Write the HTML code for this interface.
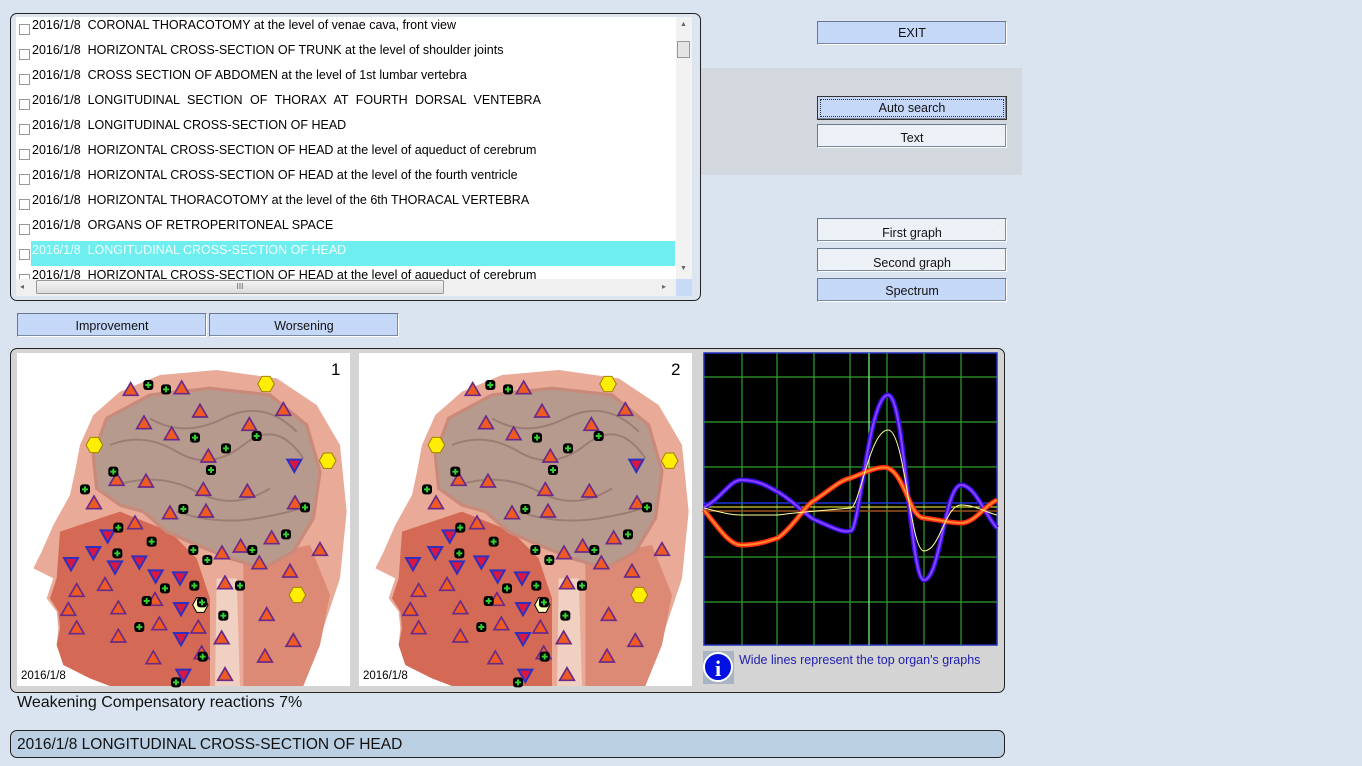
<!DOCTYPE html>
<html><head><meta charset="utf-8"><style>
*{margin:0;padding:0;box-sizing:border-box}
body{width:1362px;height:766px;background:#d9e4f0;font-family:"Liberation Sans",sans-serif;position:relative;overflow:hidden}
.a{position:absolute}
.btn{position:absolute;background:#c6d8f8;border:1px solid #6a7890;border-right-color:#fff;border-bottom-color:#fff;box-shadow:inset -1px -1px 0 #7a8aa0;font-size:12.5px;text-align:center;color:#111}
.hat{background:repeating-linear-gradient(45deg,#e6ecf3 0 1px,#f4f7fa 1px 2px)}
.row{position:absolute;left:16px;height:25px;width:660px;font-size:12.5px;line-height:25px;color:#000;white-space:nowrap}
.row i{position:absolute;left:3px;top:11px;width:11px;height:11px;border:1px solid #999;background:#fff}
.row span{position:absolute;left:16px;top:0}
</style></head><body>
<div class="a" style="left:700px;top:68px;width:322px;height:107px;background:#d3d8de"></div>

<div class="a" style="left:10px;top:13px;width:691px;height:288px;border:1px solid #222;border-radius:7px;background:#dde6f0"></div>
<div class="a" style="left:16px;top:17px;width:676px;height:279px;background:#fff;overflow:hidden">
<div class="a" style="left:15px;top:224px;width:644px;height:25px;background:#6eeeee"></div>
</div>
<div class="a" style="left:16px;top:17px;width:660px;height:262px;overflow:hidden">
<div class="row" style="left:0;top:-4px"><i></i><span>2016/1/8&nbsp; CORONAL THORACOTOMY at the level of venae cava, front view</span></div>
<div class="row" style="left:0;top:21px"><i></i><span>2016/1/8&nbsp; HORIZONTAL CROSS-SECTION OF TRUNK at the level of shoulder joints</span></div>
<div class="row" style="left:0;top:46px"><i></i><span>2016/1/8&nbsp; CROSS SECTION OF ABDOMEN at the level of 1st lumbar vertebra</span></div>
<div class="row" style="left:0;top:71px"><i></i><span>2016/1/8&nbsp; <b style="font-weight:normal;word-spacing:4px">LONGITUDINAL SECTION OF THORAX AT FOURTH DORSAL VENTEBRA</b></span></div>
<div class="row" style="left:0;top:96px"><i></i><span>2016/1/8&nbsp; LONGITUDINAL CROSS-SECTION OF HEAD</span></div>
<div class="row" style="left:0;top:121px"><i></i><span>2016/1/8&nbsp; HORIZONTAL CROSS-SECTION OF HEAD at the level of aqueduct of cerebrum</span></div>
<div class="row" style="left:0;top:146px"><i></i><span>2016/1/8&nbsp; HORIZONTAL CROSS-SECTION OF HEAD at the level of the fourth ventricle</span></div>
<div class="row" style="left:0;top:171px"><i></i><span>2016/1/8&nbsp; HORIZONTAL THORACOTOMY at the level of the 6th THORACAL VERTEBRA</span></div>
<div class="row" style="left:0;top:196px"><i></i><span>2016/1/8&nbsp; ORGANS OF RETROPERITONEAL SPACE</span></div>
<div class="row" style="left:0;top:221px"><i></i><span style="color:#f4ffff">2016/1/8&nbsp; LONGITUDINAL CROSS-SECTION OF HEAD</span></div>
<div class="row" style="left:0;top:246px"><i></i><span>2016/1/8&nbsp; HORIZONTAL CROSS-SECTION OF HEAD at the level of aqueduct of cerebrum</span></div>
</div>
<div class="a" style="left:676px;top:17px;width:16px;height:262px;background:#f2f2f2"></div>
<div class="a" style="left:680px;top:21px;font-size:7px;color:#666">▲</div>
<div class="a" style="left:677px;top:41px;width:13px;height:17px;border:1px solid #999;background:#e4e4e4"></div>
<div class="a" style="left:680px;top:265px;font-size:7px;color:#666">▼</div>
<div class="a" style="left:16px;top:279px;width:660px;height:17px;background:#f0f0f0"></div>
<div class="a" style="left:20px;top:282px;font-size:8px;color:#666">◂</div>
<div class="a" style="left:36px;top:280px;width:408px;height:14px;border:1px solid #999;border-radius:2px;background:linear-gradient(#f4f4f4,#dcdcdc);font-size:8px;text-align:center;line-height:12px;color:#555">III</div>
<div class="a" style="left:662px;top:282px;font-size:8px;color:#666">▸</div>
<div class="a" style="left:676px;top:279px;width:16px;height:17px;background:#c8daf4"></div>

<div class="btn" style="left:817px;top:21px;width:190px;height:24px;line-height:22px">EXIT</div>
<div class="btn" style="left:817px;top:96px;width:190px;height:24px;line-height:22px;border-color:#333"><div style="margin:2px;border:1px dotted #333;line-height:16px">Auto search</div></div>
<div class="btn hat" style="left:817px;top:124px;width:190px;height:24px;line-height:26px">Text</div>
<div class="btn hat" style="left:817px;top:218px;width:190px;height:24px;line-height:28px">First graph</div>
<div class="btn hat" style="left:817px;top:248px;width:190px;height:24px;line-height:28px">Second graph</div>
<div class="btn" style="left:817px;top:278px;width:190px;height:24px;line-height:24px">Spectrum</div>
<div class="btn" style="left:17px;top:313px;width:190px;height:24px;line-height:25px">Improvement</div>
<div class="btn" style="left:209px;top:313px;width:190px;height:24px;line-height:25px">Worsening</div>

<div class="a" style="left:10px;top:348px;width:995px;height:345px;border:1px solid #222;border-radius:7px;background:#d4d4d4"></div>

<svg class="a" style="left:0;top:0" width="1362" height="766">
<defs>
<polygon id="tu" points="0,-22 22,16 -22,16" fill="#ee5a22" stroke="#6a2a8a" stroke-width="5"/>
<polygon id="td" points="-21,-16 21,-16 0,21" fill="#d81840" stroke="#3030c0" stroke-width="6"/>
<g id="pl"><rect x="-15" y="-15" width="30" height="30" rx="9" fill="#000"/><path d="M-9 0H9M0 -9V9" stroke="#3c3" stroke-width="6"/></g>
<polygon id="hx" points="-25,0 -12,-23 12,-23 25,0 12,23 -12,23" fill="#ffee00" stroke="#a08000" stroke-width="3"/>
<g id="head">
<rect x="21" y="24" width="999" height="999" fill="#fff"/>
<path d="M880 1023 L930 880 L990 700 L1010 500 L990 300 L920 180 L800 100 L620 75 L450 90 L330 140 L250 210 L210 300 L195 380 L180 450 L130 540 L95 620 L70 670 L130 700 L110 760 L140 800 L145 850 L140 900 L160 960 L240 1000 L300 1023 Z" fill="#e9ab98"/>
<path d="M150 560 L330 500 L480 560 L560 640 L600 760 L600 1023 L300 1023 L240 1000 L160 960 L140 900 L150 850 L145 800 L120 760 L140 700 Z" fill="#d46a55"/>
<path d="M700 640 L900 600 L960 750 L930 900 L880 1023 L700 1023 Z" fill="#dc8a76"/>
<path d="M620 700 L680 700 L690 1023 L615 1023 Z" fill="#f0d0c0"/>
<path d="M250 330 L290 220 L420 150 L600 130 L780 150 L890 240 L930 380 L910 520 L850 620 L760 670 L660 640 L560 600 L470 560 L400 500 L330 480 L260 430 Z" fill="#b79a8e" stroke="#c88a7a" stroke-width="10"/>
<path d="M300 300 Q400 260 500 320 T700 300 T880 340 M320 420 Q450 380 560 440 T780 430 M420 220 Q520 280 640 220 T860 260 M500 500 Q620 540 740 520 T890 480" stroke="#8a6a62" stroke-width="6" fill="none" opacity=".6"/>
<g>
<use href="#tu" x="362" y="135"/><use href="#tu" x="515" y="130"/><use href="#tu" x="570" y="200"/><use href="#tu" x="820" y="195"/><use href="#tu" x="402" y="235"/><use href="#tu" x="485" y="268"/><use href="#tu" x="718" y="240"/><use href="#tu" x="595" y="335"/><use href="#tu" x="408" y="410"/><use href="#tu" x="320" y="405"/><use href="#tu" x="252" y="475"/><use href="#tu" x="580" y="435"/><use href="#tu" x="712" y="440"/><use href="#tu" x="855" y="475"/><use href="#tu" x="480" y="505"/><use href="#tu" x="588" y="500"/><use href="#tu" x="375" y="535"/><use href="#tu" x="785" y="580"/><use href="#tu" x="692" y="605"/><use href="#tu" x="636" y="625"/><use href="#tu" x="930" y="615"/><use href="#tu" x="748" y="655"/><use href="#tu" x="840" y="680"/><use href="#tu" x="645" y="715"/><use href="#tu" x="285" y="720"/><use href="#tu" x="200" y="738"/><use href="#tu" x="175" y="795"/><use href="#tu" x="325" y="790"/><use href="#tu" x="435" y="765"/><use href="#tu" x="200" y="850"/><use href="#tu" x="325" y="875"/><use href="#tu" x="448" y="838"/><use href="#tu" x="565" y="848"/><use href="#tu" x="635" y="880"/><use href="#tu" x="770" y="810"/><use href="#tu" x="850" y="888"/><use href="#tu" x="765" y="935"/><use href="#tu" x="430" y="940"/><use href="#tu" x="575" y="925"/><use href="#tu" x="645" y="990"/>
<use href="#td" x="293" y="572"/><use href="#td" x="250" y="622"/><use href="#td" x="183" y="655"/><use href="#td" x="315" y="665"/><use href="#td" x="388" y="650"/><use href="#td" x="437" y="692"/><use href="#td" x="510" y="698"/><use href="#td" x="853" y="360"/><use href="#td" x="513" y="790"/><use href="#td" x="513" y="880"/><use href="#td" x="520" y="990"/>
<use href="#pl" x="415" y="120"/><use href="#pl" x="468" y="133"/><use href="#pl" x="555" y="278"/><use href="#pl" x="648" y="310"/><use href="#pl" x="740" y="273"/><use href="#pl" x="603" y="375"/><use href="#pl" x="310" y="380"/><use href="#pl" x="225" y="433"/><use href="#pl" x="520" y="492"/><use href="#pl" x="885" y="487"/><use href="#pl" x="325" y="548"/><use href="#pl" x="425" y="590"/><use href="#pl" x="550" y="615"/><use href="#pl" x="592" y="645"/><use href="#pl" x="322" y="625"/><use href="#pl" x="727" y="615"/><use href="#pl" x="828" y="568"/><use href="#pl" x="465" y="730"/><use href="#pl" x="553" y="722"/><use href="#pl" x="690" y="722"/><use href="#pl" x="410" y="768"/><use href="#pl" x="640" y="812"/><use href="#pl" x="388" y="846"/><use href="#pl" x="578" y="935"/><use href="#pl" x="498" y="1012"/>
<use href="#hx" x="768" y="117"/><use href="#hx" x="253" y="300"/><use href="#hx" x="953" y="347"/><use href="#hx" x="862" y="750"/>
<polygon points="548,780 560,758 582,758 594,780 582,802 560,802" fill="#ffffc0" stroke="#000" stroke-width="3"/><use href="#pl" x="576" y="772"/>
</g>
</g>
</defs>
<g transform="translate(10,345) scale(0.33333)"><use href="#head"/></g>
<g transform="translate(352,345) scale(0.33333)"><use href="#head"/></g>
<text x="331" y="375" font-size="17" font-family="Liberation Sans">1</text>
<text x="671" y="375" font-size="17" font-family="Liberation Sans">2</text>
<text x="21" y="679" font-size="11.5" font-family="Liberation Sans">2016/1/8</text>
<text x="363" y="679" font-size="11.5" font-family="Liberation Sans">2016/1/8</text>

<rect x="704" y="353" width="293" height="292" fill="#000" stroke="#2030c0" stroke-width="1.5"/>
<g stroke="#30a030" stroke-width="1.2">
<path d="M742 353V645M777 353V645M814 353V645M850 353V645M887 353V645M924 353V645M961 353V645M704 377H997M704 422H997M704 467H997M704 557H997M704 602H997"/>
</g>
<path d="M869 353V645" stroke="#80ff80" stroke-width="1.2"/>
<path d="M704 503H997" stroke="#2040ff" stroke-width="1.2"/>
<path d="M704 507H997" stroke="#ffff40" stroke-width="1"/>
<path d="M704 511H997" stroke="#a05020" stroke-width="1.5"/>
<path d="M704 507 C720 500 730 480 741 480 C760 480 770 488 778 492 C795 502 805 515 815 520 C830 526 845 535 852 530 C860 520 870 395 888 395 C905 395 910 580 924 580 C940 580 945 485 961 485 C975 485 985 515 997 528" stroke="#3010e0" stroke-width="5" fill="none"/>
<path d="M704 507 C720 500 730 480 741 480 C760 480 770 488 778 492 C795 502 805 515 815 520 C830 526 845 535 852 530 C860 520 870 395 888 395 C905 395 910 580 924 580 C940 580 945 485 961 485 C975 485 985 515 997 528" stroke="#9040ff" stroke-width="2" fill="none"/>
<path d="M704 510 C720 530 730 545 741 545 C760 545 770 540 778 538 C795 525 805 505 815 500 C830 490 840 480 851 478 C870 470 880 466 888 468 C905 475 910 518 924 518 C940 520 950 523 961 523 C975 523 985 505 997 500" stroke="#ff2a10" stroke-width="5" fill="none"/>
<path d="M704 510 C720 530 730 545 741 545 C760 545 770 540 778 538 C795 525 805 505 815 500 C830 490 840 480 851 478 C870 470 880 466 888 468 C905 475 910 518 924 518 C940 520 950 523 961 523 C975 523 985 505 997 500" stroke="#ff8a30" stroke-width="2" fill="none"/>
<path d="M704 508 C720 512 730 515 741 515 L778 515 C800 512 830 510 851 508 C860 505 870 430 888 430 C905 430 910 551 924 551 C940 551 945 505 961 505 C975 505 985 512 997 515" stroke="#ffffa0" stroke-width="1" fill="none"/>
<rect x="703" y="651" width="31" height="33" fill="#a8b4c4"/>
<circle cx="718" cy="667" r="14" fill="#0010e0" stroke="#fff" stroke-width="2"/>
<text x="718" y="676" font-size="22" font-weight="bold" fill="#fff" text-anchor="middle" font-family="Liberation Serif">i</text>
<text x="739" y="664" font-size="12.5" fill="#2020b0" font-family="Liberation Sans">Wide lines represent the top organ's graphs</text>
</svg>

<div class="a" style="left:17px;top:694px;font-size:16px;color:#111">Weakening Compensatory reactions 7%</div>
<div class="a" style="left:10px;top:730px;width:995px;height:28px;border:1px solid #222;border-radius:7px;background:#bcd0e4;font-size:15.5px;line-height:28px;padding-left:6px;color:#111">2016/1/8 LONGITUDINAL CROSS-SECTION OF HEAD</div>
</body></html>
